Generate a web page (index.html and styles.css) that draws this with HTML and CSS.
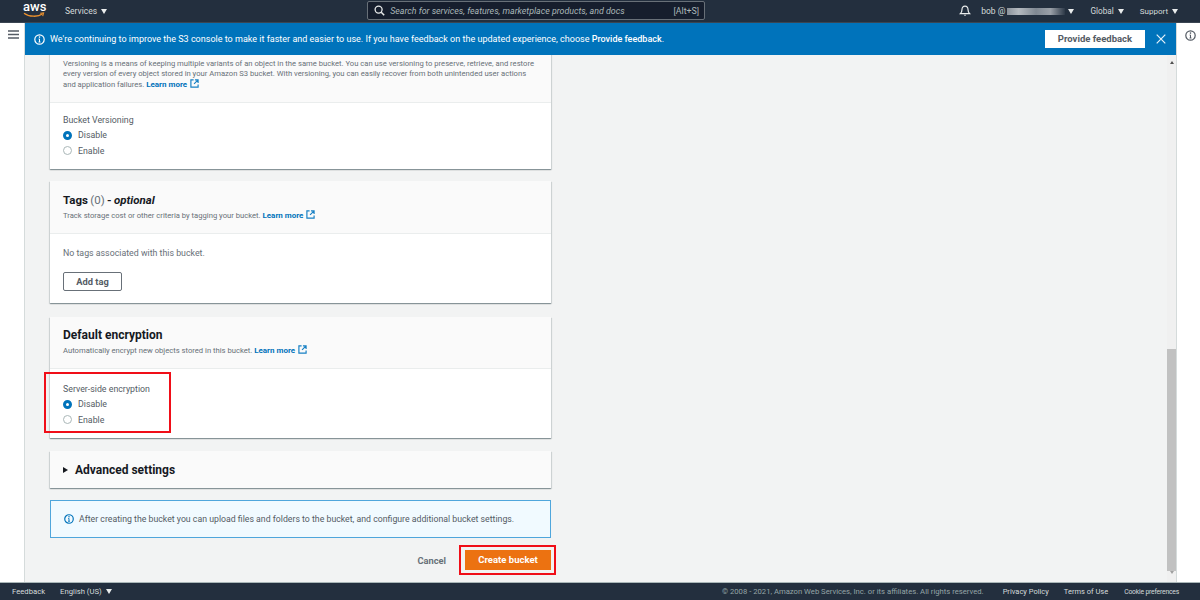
FILE: index.html
```html
<!DOCTYPE html>
<html lang="en">
<head>
<meta charset="utf-8">
<title>Create bucket - S3</title>
<link rel="stylesheet" href="styles.css">
</head>
<body>
<header class="topnav">
  <div class="logo"><span class="logo-text">aws</span>
    <svg class="logo-smile" width="22" height="6" viewBox="0 0 22 6"><path d="M1 1.200C6 5 15 5.200 19.400 2" fill="none" stroke="#ec912d" stroke-width="1.300"/><path d="M17.200 1.200l3.400-.3-.9 3.200" fill="none" stroke="#ec912d" stroke-width="1.100"/></svg>
  </div>
  <span class="nav-item services">Services <i class="caret"></i></span>
  <div class="search">
    <svg class="search-icon" width="11" height="11" viewBox="0 0 11 11"><circle cx="4.600" cy="4.600" r="3.500" fill="none" stroke="#e8eaea" stroke-width="1.300"/><path d="M7.200 7.200l3 3" stroke="#e8eaea" stroke-width="1.500"/></svg>
    <span class="search-text">Search for services, features, marketplace products, and docs</span>
    <span class="search-key">[Alt+S]</span>
  </div>
  <div class="nav-right">
    <svg class="bell" width="12" height="12" viewBox="0 0 12 12"><path d="M6 1.200c-2 0-3 1.500-3 3.200 0 2.400-.6 3.200-1.700 4.300h9.400C9.600 7.600 9 6.800 9 4.400 9 2.700 8 1.200 6 1.200z" fill="none" stroke="#eaeded" stroke-width="1.200"/><path d="M4.700 9.800a1.400 1.400 0 002.600 0z" fill="#eaeded"/></svg>
    <span class="nav-item user">bob @ <span class="redacted"></span><i class="caret"></i></span>
    <span class="nav-item global">Global <i class="caret"></i></span>
    <span class="nav-item support">Support <i class="caret"></i></span>
  </div>
</header>

<div class="shell">
  <aside class="rail">
    <svg width="11" height="9" viewBox="0 0 11 9"><path d="M0 1h11M0 4.500h11M0 8h11" stroke="#545b64" stroke-width="1.300"/></svg>
  </aside>
  <main class="main">
    <div class="banner">
      <svg class="info-icon" width="11" height="11" viewBox="0 0 11 11"><circle cx="5.500" cy="5.500" r="4.700" fill="none" stroke="#fff" stroke-width="1.200"/><path d="M5.500 5v3M4.500 8h2M4.600 5h1" stroke="#fff" stroke-width="1"/><circle cx="5.500" cy="3.100" r=".8" fill="#fff"/></svg>
      <p class="banner-text">We're continuing to improve the S3 console to make it faster and easier to use. If you have feedback on the updated experience, choose <b>Provide feedback</b>.</p>
      <span class="banner-btn">Provide feedback</span>
      <svg class="banner-close" width="10" height="10" viewBox="0 0 10 10"><path d="M.7.7l8.600 8.600M9.300.7L.7 9.300" stroke="#e6f2fa" stroke-width="1.200"/></svg>
    </div>
    <div class="scroller">
      <div class="content">
        <section class="card gap-12">
          <div class="card-head ver-head">
            <h2 class="title">Bucket Versioning</h2>
            <p class="desc">Versioning is a means of keeping multiple variants of an object in the same bucket. You can use versioning to preserve, retrieve, and restore every version of every object stored in your Amazon S3 bucket. With versioning, you can easily recover from both unintended user actions and application failures. <a class="more">Learn more</a> <svg class="ext" viewBox="0 0 10 10"><path d="M4 1H1v8h8V6M5.500 1H9v3.500M9 1L4.500 5.500" fill="none" stroke="#1780c4" stroke-width="1.300"/></svg></p>
          </div>
          <div class="card-body ver-body">
            <div class="label">Bucket Versioning</div>
            <div class="radio"><i class="dot on"></i>Disable</div>
            <div class="radio"><i class="dot"></i>Enable</div>
          </div>
        </section>

        <section class="card gap-14">
          <div class="card-head tags-head">
            <h2 class="title tags-title">Tags <span class="count">(0)</span> - <em>optional</em></h2>
            <p class="desc">Track storage cost or other criteria by tagging your bucket. <a class="more">Learn more</a> <svg class="ext" viewBox="0 0 10 10"><path d="M4 1H1v8h8V6M5.500 1H9v3.500M9 1L4.500 5.500" fill="none" stroke="#1780c4" stroke-width="1.300"/></svg></p>
          </div>
          <div class="card-body tags-body">
            <p class="empty">No tags associated with this bucket.</p>
            <span class="btn">Add tag</span>
          </div>
        </section>

        <section class="card gap-13">
          <div class="card-head enc-head">
            <h2 class="title">Default encryption</h2>
            <p class="desc">Automatically encrypt new objects stored in this bucket. <a class="more">Learn more</a> <svg class="ext" viewBox="0 0 10 10"><path d="M4 1H1v8h8V6M5.500 1H9v3.500M9 1L4.500 5.500" fill="none" stroke="#1780c4" stroke-width="1.300"/></svg></p>
          </div>
          <div class="card-body enc-body">
            <div class="label">Server-side encryption</div>
            <div class="radio"><i class="dot on"></i>Disable</div>
            <div class="radio"><i class="dot"></i>Enable</div>
            <span class="mark mark-enc"></span>
          </div>
        </section>

        <section class="card advanced gap-12">
          <i class="tri"></i><h2 class="title">Advanced settings</h2>
        </section>

        <div class="notice">
          <svg width="10" height="10" viewBox="0 0 11 11"><circle cx="5.500" cy="5.500" r="4.700" fill="none" stroke="#0073bb" stroke-width="1.300"/><path d="M5.500 5v3M4.500 8h2M4.600 5h1" stroke="#0073bb" stroke-width="1"/><circle cx="5.500" cy="3.100" r=".8" fill="#0073bb"/></svg>
          After creating the bucket you can upload files and folders to the bucket, and configure additional bucket settings.
        </div>

        <div class="actions">
          <span class="cancel">Cancel</span>
          <span class="primary">Create bucket<span class="mark mark-btn"></span></span>
        </div>
      </div>
      <div class="scrollbar">
        <i class="sb-up"></i>
        <div class="sb-track"><div class="sb-thumb"></div></div>
        <i class="sb-down"></i>
      </div>
    </div>
  </main>
  <aside class="rail-right">
    <svg width="11" height="11" viewBox="0 0 11 11"><circle cx="5.500" cy="5.500" r="4.700" fill="none" stroke="#545b64" stroke-width="1.200"/><path d="M5.500 5v3M4.500 8h2M4.600 5h1" stroke="#545b64" stroke-width="1"/><circle cx="5.500" cy="3.100" r=".8" fill="#545b64"/></svg>
  </aside>
</div>

<footer class="footer">
  <span class="foot-link feedback">Feedback</span>
  <span class="foot-link lang">English (US) <i class="caret"></i></span>
  <span class="copy">© 2008 - 2021, Amazon Web Services, Inc. or its affiliates. All rights reserved.</span>
  <span class="foot-link privacy">Privacy Policy</span>
  <span class="foot-link terms">Terms of Use</span>
  <span class="foot-link cookies">Cookie preferences</span>
</footer>
</body>
</html>
```

FILE: styles.css
```css
* { box-sizing: border-box; }
html, body { height: 100%; }
body {
  margin: 0;
  height: 600px;
  overflow: hidden;
  display: flex;
  flex-direction: column;
  font-family: Roboto, "Noto Sans", sans-serif;
  font-size: 9px;
  color: #545b64;
  background: #fff;
}
p, h2 { margin: 0; }

/* top navigation */
.topnav {
  flex: 0 0 23px;
  display: flex;
  align-items: center;
  background: #232f3e;
  border-bottom: 1px solid #3a4552;
  color: #d5dbdb;
  font-size: 8.500px;
}
.logo { position: relative; width: 22px; height: 18px; margin-left: 23px; }
.logo-text { display: block; color: #fff; font-size: 13px; line-height: 12px; font-weight: 500; text-align: center; margin-top: -1px; }
.logo-smile { display: block; margin-top: -1px; }
.services { margin-left: 20px; }
.caret {
  display: inline-block;
  width: 0; height: 0;
  margin-left: 2px;
  vertical-align: 0;
  border-left: 3.500px solid transparent;
  border-right: 3.500px solid transparent;
  border-top: 5px solid #eaeded;
}
.search {
  margin-left: 260px;
  margin-bottom: 1px;
  width: 338px;
  height: 19px;
  display: flex;
  align-items: center;
  padding: 0 5px 0 6px;
  background: #161e2d;
  border: 1px solid #687078;
  border-radius: 2px;
  color: #aab7b8;
}
.search-icon { flex: none; margin-right: 5px; margin-left: 0; }
.search-text { flex: 1; font-style: italic; font-size: 8.850px; white-space: nowrap; }
.search-key { font-size: 8.850px; }
.nav-right { display: flex; align-items: center; margin-left: auto; }
.bell { margin-right: 10px; }
.user { display: flex; align-items: center; margin-right: 16px; white-space: pre; font-size: 8.500px; }
.redacted { width: 58px; height: 7px; background: linear-gradient(90deg, #8a929b, #b4b9bf 20%, #7f8892 50%, #9aa0a8 75%, #2c3847); }
.user .caret { margin-left: 3px; }
.global { margin-right: 16px; font-size: 8.200px; }
.support { margin-right: 22px; font-size: 8px; }

/* shell */
.shell { flex: 1; display: flex; min-height: 0; }
.rail { flex: 0 0 25px; padding: 7px 0 0 8px; background: #fff; border-right: 1px solid #d5dbdb; }
.rail-right { flex: 0 0 24px; padding: 7px 0 0 8px; background: #fff; border-left: 1px solid #d5dbdb; }
.main { flex: 1; min-width: 0; display: flex; flex-direction: column; }

.banner {
  position: relative;
  z-index: 1;
  flex: 0 0 32px;
  display: flex;
  align-items: center;
  padding-left: 9px;
  background: #0073bb;
  color: #fff;
}
.info-icon { flex: none; margin-right: 5px; }
.banner-text { flex: 1; font-size: 9.020px; white-space: nowrap; }
.banner-text b { font-weight: 500; }
.banner-btn {
  flex: 0 0 100px;
  height: 18px;
  line-height: 18px;
  background: #fff;
  color: #545b64;
  font-weight: 700;
  font-size: 9.500px;
  text-align: center;
  margin-right: 11px;
}
.banner-close { flex: none; margin-right: 10px; }

.scroller { flex: 1; min-height: 0; display: flex; background: #f2f3f3; }
.content {
  flex: 1;
  min-width: 0;
  overflow: hidden;
  display: flex;
  flex-direction: column;
  justify-content: flex-end;
  padding: 0 0 12px 25px;
}
.scrollbar { flex: 0 0 9px; display: flex; flex-direction: column; align-items: center; background: #f0f0f0; }
.sb-up, .sb-down { flex: none; width: 0; border-left: 2.500px solid transparent; border-right: 2.500px solid transparent; }
.sb-up { height: 9px; border-bottom: 3px solid #505050; border-top: 3px solid transparent; }
.sb-down { height: 11px; border-top: 3px solid #a0a0a0; border-bottom: 5px solid transparent; }
.sb-track { flex: 1; width: 100%; display: flex; flex-direction: column; justify-content: flex-end; }
.sb-thumb { height: 222px; background: #c1c1c1; }

/* cards */
.card {
  flex: none;
  width: 501px;
  background: #fff;
  box-shadow: 0 1px 1px rgba(0,28,36,.3), 1px 1px 1px rgba(0,28,36,.1), -1px 1px 1px rgba(0,28,36,.1);
}
.gap-12 { margin-bottom: 12px; }
.gap-13 { margin-bottom: 13px; }
.gap-14 { margin-bottom: 14px; }
.card-head { padding: 10px 13px 13px; background: #fafafa; border-bottom: 1px solid #eaeded; }
.card-body { position: relative; padding: 14px 13px 0; }
.title { font-size: 12px; line-height: 16px; font-weight: 700; color: #16191f; }
.title em { font-weight: 700; }
.tags-title { font-size: 11.500px; word-spacing: -.5px; }
.count { font-weight: 400; color: #687078; }
.desc { font-size: 7.650px; line-height: 10px; margin-top: 2px; color: #687078; }
.more { color: #0073bb; font-weight: 700; font-size: 8px; }
.ext { display: inline-block; width: 9px; height: 9px; vertical-align: -1.500px; margin-left: 1px; }
.label { font-size: 8.800px; line-height: 12px; margin-bottom: 1.250px; color: #545b64; }
.radio { display: flex; align-items: center; font-size: 8.800px; height: 15.500px; color: #545b64; }
.dot { flex: none; width: 9px; height: 9px; margin-right: 6px; border-radius: 50%; border: 1px solid #aab7b8; background: #fff; }
.dot.on { border: 3px solid #0073bb; }
.ver-head .desc { margin-top: 8px; }
.ver-body { height: 66px; padding-top: 11px; }
.tags-head { padding-top: 11px; padding-bottom: 12px; }
.tags-body { height: 69px; padding-top: 13px; }
.empty { font-size: 8.800px; line-height: 12px; color: #687078; margin-bottom: 13px; }
.btn { display: block; width: 59px; height: 19px; line-height: 17px; border: 1px solid #687078; border-radius: 2px; font-weight: 700; text-align: center; font-size: 9.300px; }
.enc-body { height: 69px; }
.advanced { display: flex; align-items: center; height: 37px; padding-left: 13px; background: #fafafa; }
.tri { width: 0; height: 0; margin-right: 7px; border-top: 3.500px solid transparent; border-bottom: 3.500px solid transparent; border-left: 5px solid #16191f; }
.notice {
  flex: none;
  width: 501px;
  height: 38px;
  display: flex;
  align-items: center;
  gap: 5px;
  padding-left: 13px;
  background: #f1faff;
  border: 1px solid #4fa6dc;
  font-size: 8.740px;
  color: #545b64;
}
.actions { flex: none; width: 501px; height: 20px; margin-top: 12px; display: flex; align-items: center; justify-content: flex-end; }
.cancel { font-weight: 700; color: #687078; margin-right: 19px; font-size: 9.300px; }
.primary { position: relative; width: 86px; height: 20px; line-height: 20px; background: #ec7211; color: #fff; font-weight: 700; text-align: center; font-size: 9.500px; }

/* red annotation frames */
.mark { position: absolute; border: 2.500px solid #f00e18; pointer-events: none; }
.mark-enc { left: -6px; top: 3px; width: 127px; height: 61px; }
.mark-btn { left: -6px; top: -5px; width: 97px; height: 30px; }

/* footer */
.footer {
  flex: 0 0 18px;
  display: flex;
  align-items: center;
  background: #232f3e;
  border-top: 1px solid #aab7b8;
  font-size: 7.700px;
  color: #d5dbdb;
}
.feedback { margin-left: 12px; }
.lang { margin-left: 15px; }
.copy { margin-left: auto; color: #95a5a6; }
.privacy { margin-left: 19px; font-size: 7.500px; }
.terms { margin-left: 15px; font-size: 7.500px; }
.cookies { margin-left: 16px; margin-right: 21px; font-size: 6.800px; letter-spacing: -.2px; }
```
